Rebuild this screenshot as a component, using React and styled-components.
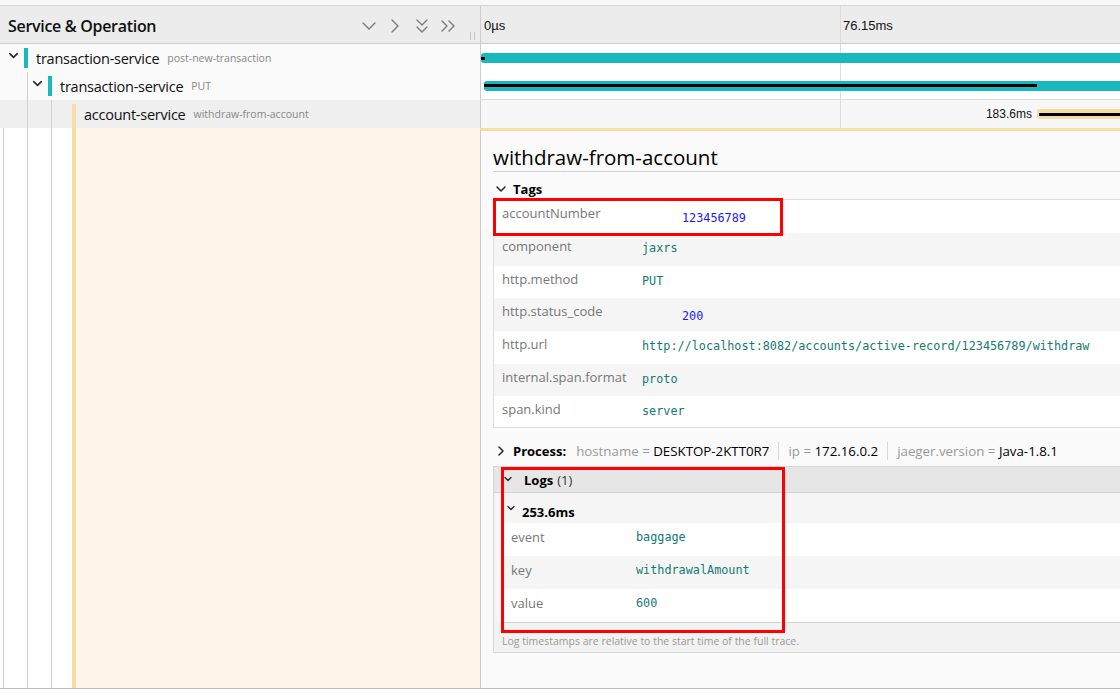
import React from 'react';
import styled, { createGlobalStyle, css } from 'styled-components';
import { ChevronDown, ChevronRight, ChevronsDown, ChevronsRight } from 'lucide-react';

const GlobalStyle = createGlobalStyle`
  html, body { margin: 0; padding: 0; background: #fff; overflow: hidden; }
  body { font-family: "Open Sans", "Noto Sans", sans-serif; color: #000; }
  * { box-sizing: border-box; }
`;

const TEAL = '#17b8be';
const GOLD = '#f8dca1';

const spans = [
  { id: 1, service: 'transaction-service', op: 'post-new-transaction', depth: 0, color: TEAL, toggle: true,
    bar: { left: 0, width: 102 }, crit: { left: 0, width: 0.6 } },
  { id: 2, service: 'transaction-service', op: 'PUT', depth: 1, color: TEAL, toggle: true,
    bar: { left: 0.47, width: 102 }, crit: { left: 0.47, width: 86.5 } },
  { id: 3, service: 'account-service', op: 'withdraw-from-account', depth: 2, color: GOLD, selected: true,
    bar: { left: 87.0, width: 20 }, crit: { left: 87.3, width: 20 }, label: '183.6ms' },
];

const ticks = [
  { left: 0, label: '0µs' },
  { left: 359, label: '76.15ms' },
];

const tags = [
  { key: 'accountNumber', value: '123456789', num: true },
  { key: 'component', value: 'jaxrs' },
  { key: 'http.method', value: 'PUT' },
  { key: 'http.status_code', value: '200', num: true },
  { key: 'http.url', value: 'http://localhost:8082/accounts/active-record/123456789/withdraw' },
  { key: 'internal.span.format', value: 'proto' },
  { key: 'span.kind', value: 'server' },
];

const processTags = [
  { key: 'hostname', value: 'DESKTOP-2KTT0R7' },
  { key: 'ip', value: '172.16.0.2' },
  { key: 'jaeger.version', value: 'Java-1.8.1' },
];

const logFields = [
  { key: 'event', value: 'baggage' },
  { key: 'key', value: 'withdrawalAmount' },
  { key: 'value', value: '600' },
];

/* ---------- layout ---------- */
const Page = styled.div`
  width: 1120px;
  height: 696px;
  overflow: hidden;
  display: flex;
  flex-direction: column;
  background: #fff;
`;

const TopStrip = styled.div`
  height: 6px;
  flex-shrink: 0;
  background: #f8f8f8;
  border-bottom: 1px solid #d6d6d6;
`;

const GridRow = styled.div`
  display: grid;
  grid-template-columns: 480px 1fr;
  flex-shrink: 0;
  height: ${p => p.$h}px;
`;

/* ---------- header ---------- */
const HeaderRow = styled(GridRow)`
  background: #ececec;
  border-bottom: 1px solid #cdcdcd;
`;

const HeaderLeft = styled.div`
  display: flex;
  align-items: center;
  padding: 2px 5px 0 8px;
`;

const HeaderTitle = styled.h3`
  margin: 0;
  font-size: 16px;
  font-weight: 600;
  letter-spacing: -0.3px;
  color: #111;
  flex: 1;
`;

const HeaderActions = styled.div`
  display: flex;
  align-items: center;
  gap: 2.5px;
  color: #7a7a7a;
`;

const IconButton = styled.span`
  width: 24px;
  height: 24px;
  display: flex;
  align-items: center;
  justify-content: center;
`;

const Resizer = styled.span`
  align-self: flex-end;
  margin: 0 0 3px 10px;
  width: 5px;
  height: 8px;
  border-left: 1px solid #c4c4c4;
  border-right: 1px solid #c4c4c4;
`;

const Timeline = styled.div`
  position: relative;
  border-left: 1px solid #cdcdcd;
  overflow: hidden;
  background: ${p => p.$bg || 'transparent'};
  ${p => p.$divider && css`border-bottom: 1px solid #dcdcdc;`}
`;

const TickLine = styled.span`
  position: absolute;
  top: 0;
  bottom: 0;
  width: 1px;
  background: #dcdcdc;
`;

const TickLabel = styled.span`
  position: absolute;
  top: 50%;
  transform: translateY(-50%);
  padding-left: 3px;
  font-family: "Liberation Sans", Arial, sans-serif;
  font-size: 13px;
  color: #111;
  white-space: nowrap;
`;

/* ---------- span rows ---------- */
const NameCell = styled.div`
  display: flex;
  align-items: center;
  background: ${p => (p.$selected ? '#efefef' : '#fafafa')};
  min-width: 0;
`;

const Slot = styled.span`
  width: 24px;
  flex-shrink: 0;
  align-self: stretch;
  display: flex;
  align-items: center;
  justify-content: center;
  padding: 0 0 5px 3px;
  color: #222;
  ${p => p.$guide && css`
    background: linear-gradient(#d0d0d0, #d0d0d0) 3px 0 / 1px 100% no-repeat;
  `}
`;

const ColorBar = styled.span`
  width: 4px;
  flex-shrink: 0;
  background: ${p => p.$color};
  margin-right: 8px;
  ${p => (p.$expanded
    ? css`align-self: stretch; margin-top: 4px;`
    : css`height: 20px;`)}
`;

const ServiceName = styled.span`
  font-size: 14.5px;
  color: #111;
  white-space: nowrap;
  letter-spacing: -0.25px;
`;

const OpName = styled.span`
  font-size: 10.5px;
  color: #888;
  margin-left: 8px;
  white-space: nowrap;
`;

const SpanBar = styled.span`
  position: absolute;
  top: 50%;
  height: 10px;
  margin-top: -5px;
  border-radius: 3px;
  background: ${p => p.$color};
`;

const CritLine = styled.span`
  position: absolute;
  top: 50%;
  height: 3px;
  margin-top: -1.5px;
  background: #000;
`;

const BarLabel = styled.span`
  position: absolute;
  right: calc(100% + 5px);
  top: 50%;
  transform: translateY(-50%);
  font-family: "Liberation Sans", Arial, sans-serif;
  font-size: 12px;
  color: #111;
  white-space: nowrap;
`;

/* ---------- detail ---------- */
const DetailRow = styled(GridRow)`
  border-bottom: 1px solid #bdbdbd;
`;

const DetailLeft = styled.div`
  display: flex;
  background: #fff;
`;

const Stripe = styled.span`
  width: 4px;
  flex-shrink: 0;
  background: ${GOLD};
`;

const Cream = styled.span`
  flex: 1;
  background: #fef6ea;
`;

const DetailPanel = styled.div`
  border-left: 1px solid #cdcdcd;
  border-top: 3px solid ${GOLD};
  background: #fafafa;
  padding: 12px 0 0 12px;
  overflow: hidden;
  min-width: 0;
`;

const SpanTitle = styled.h2`
  margin: 0;
  font-size: 20.5px;
  font-weight: 500;
  line-height: 28px;
  color: #000;
  border-bottom: 1px solid #cfcfcf;
  white-space: nowrap;
`;

const SectionHeader = styled.div`
  display: flex;
  align-items: center;
  height: 21px;
  margin: 6px 0 0;
  font-size: 13px;
  font-weight: 700;
  color: #000;
`;

const HeaderIcon = styled.span`
  display: flex;
  width: 16px;
  margin-right: 4px;
  color: #222;
`;

const KVTable = styled.div`
  position: relative;
  border: 1px solid #dedede;
  margin-right: -2px;
  background: #fff;
`;

const KVRow = styled.div`
  display: flex;
  height: ${p => p.$h}px;
  background: ${p => (p.$odd ? '#f5f5f5' : '#fff')};
`;

const KeyCell = styled.span`
  width: ${p => p.$w}px;
  flex-shrink: 0;
  padding: 4px 8px 0;
  font-size: 13px;
  line-height: 18px;
  color: #777;
  white-space: nowrap;
`;

const ValueCell = styled.span`
  padding-top: ${p => (p.$num ? 10 : 7)}px;
  padding-left: ${p => (p.$num ? 40 : 0)}px;
  font-family: "DejaVu Sans Mono", "Liberation Mono", monospace;
  font-size: 11.8px;
  line-height: 16px;
  color: ${p => (p.$num ? '#1a1aff' : '#137a74')};
  white-space: nowrap;
`;

const Highlight = styled.span`
  position: absolute;
  left: ${p => p.$x}px;
  top: ${p => p.$y}px;
  width: ${p => p.$w}px;
  height: ${p => p.$h}px;
  border: 3px solid #f00;
  pointer-events: none;
`;

const ProcessLine = styled.div`
  display: flex;
  align-items: center;
  height: 22px;
  margin-top: 12px;
  font-size: 13.3px;
  white-space: nowrap;
`;

const ProcessLabel = styled.span`
  font-weight: 700;
  font-size: 13px;
  margin-right: 10px;
`;

const ProcessItem = styled.span`
  display: flex;
  align-items: center;
  color: #000;
`;

const Muted = styled.span`
  color: #999;
  white-space: pre;
`;

const Sep = styled.span`
  width: 1px;
  height: 18px;
  background: #d8d8d8;
  margin: 0 9px;
`;

const LogsBox = styled.div`
  position: relative;
  margin-top: 4px;
  border: 1px solid #d8d8d8;
  margin-right: -2px;
  background: #f2f2f2;
`;

const LogsHeader = styled.div`
  display: flex;
  align-items: center;
  height: 26px;
  padding-left: 8px;
  background: #e6e6e6;
  border-bottom: 1px solid #d2d2d2;
  font-size: 13px;
`;

const SmallIcon = styled.span`
  display: flex;
  align-self: flex-start;
  margin: ${p => p.$mt}px ${p => p.$mr}px 0 0;
  color: #222;
`;

const Bold = styled.span`
  font-weight: 700;
`;

const Count = styled.span`
  color: #333;
  margin-left: 4px;
`;

const LogsContent = styled.div`
  padding-left: 9px;
  background: #f5f5f5;
`;

const LogItemHeader = styled.div`
  display: flex;
  align-items: center;
  height: 30px;
  padding: 7px 0 0 2px;
  font-size: 13px;
  font-weight: 700;
`;

const LogTable = styled.div`
  border-bottom: 1px solid #d0d0d0;
  background: #fff;
`;

const LogKey = styled(KeyCell)`
  padding-top: 5px;
`;

const LogValue = styled(ValueCell)`
  padding-top: 6px;
`;

const Note = styled.div`
  padding: 9px 8px 2px;
  font-size: 10.5px;
  line-height: 18px;
  color: #999;
  background: #f2f2f2;
  margin-left: -9px;
`;

/* ---------- components ---------- */
function SpanRow({ span, last }) {
  const slots = [];
  for (let i = 0; i <= span.depth; i++) {
    const guide = i >= 1;
    const showToggle = span.toggle && i === span.depth;
    slots.push(
      <Slot key={i} $guide={guide}>
        {showToggle && <ChevronDown size={15} strokeWidth={2.3} />}
      </Slot>
    );
  }
  return (
    <GridRow $h={28}>
      <NameCell $selected={span.selected}>
        {slots}
        <ColorBar $color={span.color} $expanded={span.selected} />
        <ServiceName>{span.service}</ServiceName>
        <OpName>{span.op}</OpName>
      </NameCell>
      <Timeline $bg={span.selected ? '#f7f7f7' : '#fff'} $divider={last}>
        <TickLine style={{ left: 359 }} />
        <SpanBar $color={span.color} style={{ left: `${span.bar.left}%`, width: `${span.bar.width}%` }}>
          {span.label && <BarLabel>{span.label}</BarLabel>}
        </SpanBar>
        <CritLine style={{ left: `${span.crit.left}%`, width: `${span.crit.width}%` }} />
      </Timeline>
    </GridRow>
  );
}

function KV({ rows, keyWidth, rowHeights }) {
  return rows.map((r, i) => (
    <KVRow key={r.key} $odd={i % 2 === 1} $h={rowHeights[i]}>
      <KeyCell $w={keyWidth}>{r.key}</KeyCell>
      <ValueCell $num={r.num}>{r.value}</ValueCell>
    </KVRow>
  ));
}

export default function App() {
  return (
    <>
      <GlobalStyle />
      <Page>
        <TopStrip />
        <HeaderRow $h={38}>
          <HeaderLeft>
            <HeaderTitle>Service &amp; Operation</HeaderTitle>
            <HeaderActions>
              <IconButton><ChevronDown size={24} strokeWidth={1.4} /></IconButton>
              <IconButton><ChevronRight size={24} strokeWidth={1.4} /></IconButton>
              <IconButton><ChevronsDown size={24} strokeWidth={1.4} /></IconButton>
              <IconButton><ChevronsRight size={24} strokeWidth={1.4} /></IconButton>
            </HeaderActions>
            <Resizer />
          </HeaderLeft>
          <Timeline>
            {ticks.map(t => (
              <React.Fragment key={t.label}>
                {t.left > 0 && <TickLine style={{ left: t.left }} />}
                <TickLabel style={{ left: t.left }}>{t.label}</TickLabel>
              </React.Fragment>
            ))}
          </Timeline>
        </HeaderRow>

        {spans.map((s, i) => (
          <SpanRow key={s.id} span={s} last={i === 1} />
        ))}

        <DetailRow $h={561}>
          <DetailLeft>
            <Slot $guide />
            <Slot $guide />
            <Slot $guide />
            <Stripe />
            <Cream />
          </DetailLeft>
          <DetailPanel>
            <SpanTitle>withdraw-from-account</SpanTitle>
            <SectionHeader>
              <HeaderIcon><ChevronDown size={16} strokeWidth={2.2} /></HeaderIcon>
              Tags
            </SectionHeader>
            <KVTable>
              <KV rows={tags} keyWidth={148} rowHeights={[33, 33, 32, 33, 33, 32, 31]} />
              <Highlight $x={-1} $y={-2} $w={290} $h={38} />
            </KVTable>

            <ProcessLine>
              <HeaderIcon><ChevronRight size={16} strokeWidth={2.2} /></HeaderIcon>
              <ProcessLabel>Process:</ProcessLabel>
              {processTags.map((p, i) => (
                <React.Fragment key={p.key}>
                  {i > 0 && <Sep />}
                  <ProcessItem>
                    <Muted>{p.key} = </Muted>
                    {p.value}
                  </ProcessItem>
                </React.Fragment>
              ))}
            </ProcessLine>

            <LogsBox>
              <LogsHeader>
                <SmallIcon $mt={6} $mr={10}><ChevronDown size={12} strokeWidth={2.6} /></SmallIcon>
                <Bold>Logs</Bold>
                <Count>(1)</Count>
              </LogsHeader>
              <LogsContent>
                <LogItemHeader>
                  <SmallIcon $mt={2} $mr={5}><ChevronDown size={12} strokeWidth={2.6} /></SmallIcon>
                  253.6ms
                </LogItemHeader>
                <LogTable>
                  {logFields.map((f, i) => (
                    <KVRow key={f.key} $odd={i % 2 === 1} $h={33}>
                      <LogKey $w={133}>{f.key}</LogKey>
                      <LogValue>{f.value}</LogValue>
                    </KVRow>
                  ))}
                </LogTable>
                <Note>Log timestamps are relative to the start time of the full trace.</Note>
              </LogsContent>
              <Highlight $x={7} $y={0} $w={284} $h={166} />
            </LogsBox>
          </DetailPanel>
        </DetailRow>
      </Page>
    </>
  );
}
